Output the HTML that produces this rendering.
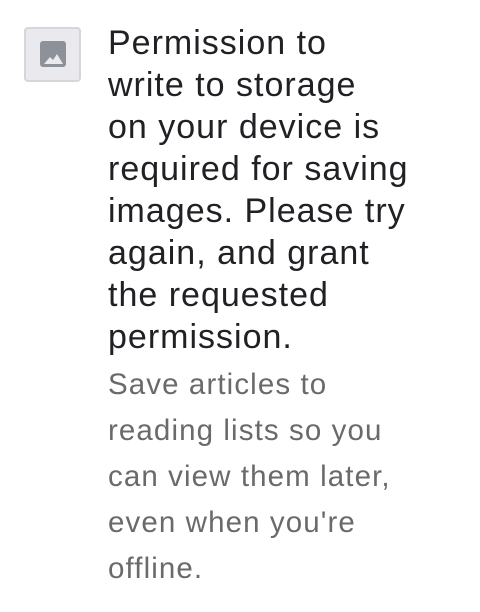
<!DOCTYPE html>
<html><head><style>
body{margin:0;width:480px;height:612px;background:#fff;font-family:"Liberation Sans",sans-serif;position:relative;overflow:hidden}
.box{position:absolute;left:24px;top:27px;width:57px;height:55px;background:#eaeaee;border:2px solid #d6d6da;border-radius:4px;box-sizing:border-box}
.t1{position:absolute;left:108px;top:22px;font-size:34px;line-height:42px;color:#202124;width:360px;letter-spacing:1px;white-space:nowrap}
.t2{position:absolute;left:108px;top:362px;font-size:29.5px;line-height:46px;color:#6a6a6a;width:360px;letter-spacing:1.1px;white-space:nowrap}
</style></head><body>
<div class="box"><svg width="57" height="55" style="position:absolute;left:-2px;top:-2px"><rect x="16" y="14" width="26" height="26" rx="3" fill="#8c919a"/><path d="M20 37 L26 30 L29 33 L33 27 L39 37 Z" fill="#eaeaee"/></svg></div>
<div class="t1">Permission to<br>write to storage<br>on your device is<br>required for saving<br>images. Please try<br>again, and grant<br>the requested<br>permission.</div>
<div class="t2">Save articles to<br>reading lists so you<br>can view them later,<br>even when you're<br>offline.</div>
</body></html>
